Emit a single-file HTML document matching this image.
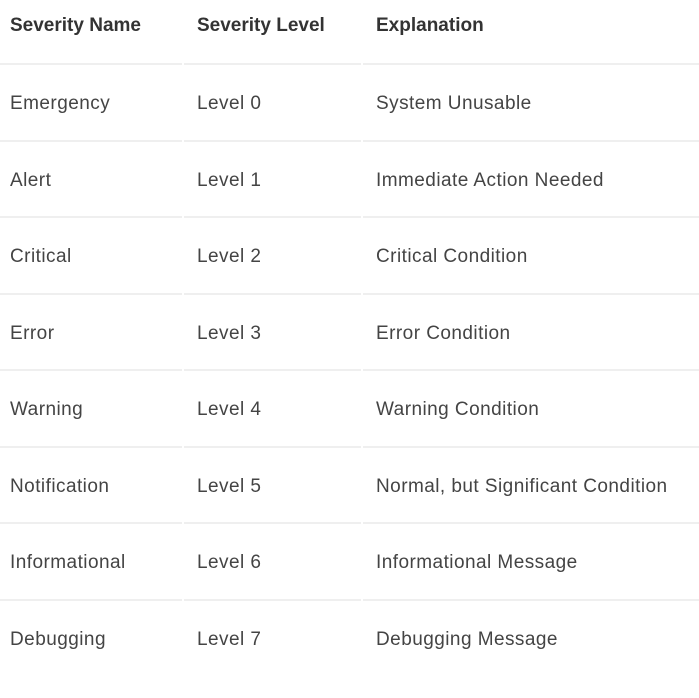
<!DOCTYPE html>
<html><head><style>
body{margin:0;background:#fff;width:699px;height:698px;overflow:hidden;font-family:"Liberation Sans",sans-serif;color:#444;font-size:19px;letter-spacing:0.45px}
.t{position:absolute;white-space:nowrap;line-height:20px}
.h{font-weight:bold;color:#333;letter-spacing:0}
.l{position:absolute;height:2px;background:#efefef}
</style></head><body>
<div class="t h" style="left:10px;top:16px">Severity Name</div>
<div class="t h" style="left:197px;top:16px">Severity Level</div>
<div class="t h" style="left:376px;top:16px">Explanation</div>
<div id="rows"></div>
<script>
var d=[["Emergency","Level 0","System Unusable"],["Alert","Level 1","Immediate Action Needed"],["Critical","Level 2","Critical Condition"],["Error","Level 3","Error Condition"],["Warning","Level 4","Warning Condition"],["Notification","Level 5","Normal, but Significant Condition"],["Informational","Level 6","Informational Message"],["Debugging","Level 7","Debugging Message"]];
var h="";
d.forEach(function(r,i){var ly=Math.round(63+i*76.5);var ty=Math.round(94+i*76.5);
h+='<div class="l" style="left:0;width:182px;top:'+ly+'px"></div><div class="l" style="left:184px;width:177px;top:'+ly+'px"></div><div class="l" style="left:363px;width:336px;top:'+ly+'px"></div>';
h+='<div class="t" style="left:10px;top:'+ty+'px">'+r[0]+'</div><div class="t" style="left:197px;top:'+ty+'px">'+r[1]+'</div><div class="t" style="left:376px;top:'+ty+'px">'+r[2]+'</div>';});
document.getElementById("rows").innerHTML=h;
</script>
</body></html>
